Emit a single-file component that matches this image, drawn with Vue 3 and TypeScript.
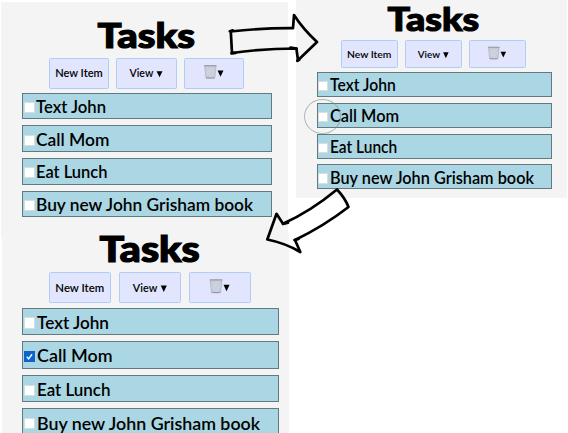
<script setup lang="ts">
interface Task {
  text: string
  width: number
}
interface Panel {
  id: string
  checked: number
}

const tasks: Task[] = [
  { text: 'Text John', width: 70 },
  { text: 'Call Mom', width: 73.5 },
  { text: 'Eat Lunch', width: 71.5 },
  { text: 'Buy new John Grisham book', width: 217 },
]

const panels: Panel[] = [
  { id: 'first', checked: -1 },
  { id: 'second', checked: -1 },
  { id: 'third', checked: 1 },
]
</script>

<template>
  <main class="board">
    <section v-for="panel in panels" :key="panel.id" class="panel" :class="panel.id">
      <svg class="title" viewBox="0 0 99 36">
        <text x="0.5" y="28.3" textLength="97.5" lengthAdjust="spacingAndGlyphs">Tasks</text>
      </svg>
      <div class="toolbar">
        <button type="button">
          <svg class="face" viewBox="0 0 60 30">
            <text x="4.8" y="19.4" textLength="50" lengthAdjust="spacingAndGlyphs">New Item</text>
          </svg>
        </button>
        <button type="button">
          <svg class="face" viewBox="0 0 60 30">
            <text x="12.5" y="19.4" textLength="25" lengthAdjust="spacingAndGlyphs">View</text>
            <path d="M41 12.8h6.2L44.1 19.3z" />
          </svg>
        </button>
        <button type="button" aria-label="Delete">
          <svg class="face" viewBox="0 0 60 30">
            <path class="bin" d="M20 7.3h12l-1.3 12.5q-4.7 1-9.4 0z" />
            <path class="mesh" d="M22 9l8 10M25 9l6 7M21 12l7 8M30 9l-8 9M27 9l-6 7M31 12l-7 8" />
            <path class="rim" d="M19.5 7h13M21.5 20h9" />
            <path d="M33.6 12h6.2L36.7 18.7z" />
          </svg>
        </button>
      </div>
      <ul>
        <li v-for="(task, i) in tasks" :key="task.text">
          <span class="check" :class="{ on: i === panel.checked }">
            <svg v-if="i === panel.checked" viewBox="0 0 10 10">
              <path d="M2 5.2L4.1 7.5L8 2.3" />
            </svg>
          </span>
          <svg class="label" viewBox="0 0 230 26">
            <text x="0" y="20.1" :textLength="task.width" lengthAdjust="spacingAndGlyphs">{{ task.text }}</text>
          </svg>
          <span v-if="panel.id === 'second' && i === 1" class="ring"></span>
        </li>
      </ul>
    </section>
    <svg class="arrows" viewBox="0 0 568 433">
      <path d="M230.8 31.5Q261 28 293 28.2L294 15Q303 29 317 42L298 60.2L296.4 48.5Q264 48.5 232 53Z" />
      <path d="M229.8 31.2l3-.8M231.5 53.3l4-.4M290.5 47.5l6 1M297.3 60.8l1.8-1" />
      <path d="M337 189.5Q311 211 283 223.8L276.5 213.8L267.3 239.5Q285 243 300.3 252L295 240Q324 226 348.5 207Q345 198 337 189.5Z" />
      <path d="M283 224l5-1.2M294.5 240l4-1" />
    </svg>
  </main>
</template>

<style>
body {
  background: #fff;
}
</style>

<style scoped>
.board {
  position: relative;
  display: grid;
  grid-template-columns: 296px 271px;
  grid-template-rows: 233px 200px;
  width: 568px;
  height: 433px;
  overflow: hidden;
  font-family: Lato, "Liberation Sans", sans-serif;
}
.panel {
  --u: 1px;
  box-sizing: border-box;
  background: #f4f4f4;
}
.first {
  width: 287px;
  height: 236px;
  margin: 2px 0 0 1px;
  padding: 18px 0 0 21px;
}
.second {
  --u: 0.94px;
  height: 198px;
  padding: 4px 0 0 20.5px;
}
.third {
  --u: 1.028px;
  width: 287px;
  margin-left: 2px;
  padding-left: 20px;
}
.title {
  display: block;
  width: calc(var(--u) * 99);
  height: calc(var(--u) * 36);
  margin-left: calc(var(--u) * 75);
  overflow: visible;
}
.title text {
  font-size: 35px;
  font-weight: 900;
  stroke: #000;
  stroke-width: 1.2px;
}
.toolbar {
  display: flex;
  gap: calc(var(--u) * 7.5);
  margin: calc(var(--u) * 2) 0 calc(var(--u) * 4) calc(var(--u) * 26.5);
}
button {
  box-sizing: border-box;
  flex: none;
  width: calc(var(--u) * 60.3);
  height: calc(var(--u) * 30.5);
  padding: 0;
  border: 1px solid #b0ccf8;
  border-radius: 1.5px;
  background: #e1e5fd;
  font-family: inherit;
}
.face {
  display: block;
  width: 100%;
  height: 100%;
}
.face text {
  font-size: 11.5px;
  font-weight: 600;
}
.bin {
  fill: #c5cad8;
  stroke: #a9adb8;
  stroke-width: 0.7;
}
.mesh {
  fill: none;
  stroke: #dfe3ee;
  stroke-width: 0.5;
}
.rim {
  fill: none;
  stroke: #92969f;
  stroke-width: 1;
}
ul {
  display: grid;
  gap: calc(var(--u) * 6);
  margin: 0;
  padding: 0;
  list-style: none;
}
li {
  position: relative;
  box-sizing: border-box;
  display: flex;
  align-items: center;
  width: calc(var(--u) * 250);
  height: calc(var(--u) * 26.7);
  padding-left: calc(var(--u) * 1);
  border: 1px solid #64797e;
  background: #aad7e3;
}
.check {
  box-sizing: border-box;
  flex: none;
  width: calc(var(--u) * 10.5);
  height: calc(var(--u) * 11);
  margin-top: calc(var(--u) * 3.5);
  border: 1px solid #d5dfe2;
  background: #fff;
}
.check.on {
  border-color: #0b63ce;
  background: #0b63ce;
}
.check svg {
  display: block;
  width: 100%;
  height: 100%;
}
.check path {
  fill: none;
  stroke: #fff;
  stroke-width: 1.6;
}
.label {
  flex: none;
  width: calc(var(--u) * 230);
  height: calc(var(--u) * 26);
  margin-left: calc(var(--u) * 1.9);
  overflow: visible;
}
.label text {
  font-size: 17.5px;
  font-weight: 600;
}
.ring {
  position: absolute;
  left: -14px;
  top: -4.5px;
  box-sizing: border-box;
  width: 37px;
  height: 35px;
  border: 1px solid rgba(125, 135, 138, 0.55);
  border-radius: 50%;
}
.arrows {
  position: absolute;
  inset: 0;
  width: 568px;
  height: 433px;
}
.arrows path {
  fill: none;
  stroke: #000;
  stroke-width: 2.7;
  stroke-linejoin: round;
  stroke-linecap: round;
}
</style>
